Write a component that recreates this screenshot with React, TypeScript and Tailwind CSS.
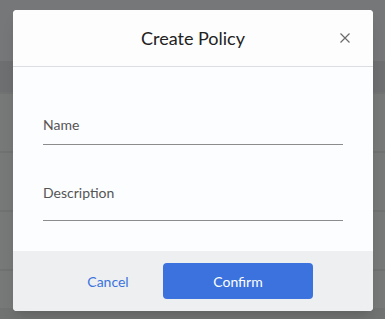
import React from "react";

export default function App() {
  return (
    <div
      className="relative w-[385px] h-[319px] overflow-hidden bg-[#767778]"
      style={{ fontFamily: "Lato, 'Noto Sans', sans-serif" }}
    >
      {/* dimmed page behind */}
      <div className="flex flex-col w-full h-full">
        <div className="h-[61px] bg-[#767778]" />
        <div className="h-[31px] bg-[#6e6f70]" />
        <div className="h-[2px] bg-[#717372]" />
        <div className="h-[57px] bg-[#777978]" />
        <div className="h-[2px] bg-[#707271]" />
        <div className="h-[57px] bg-[#777978]" />
        <div className="h-[2px] bg-[#707271]" />
        <div className="h-[57px] bg-[#777978]" />
        <div className="h-[2px] bg-[#707271]" />
        <div className="h-[37px] bg-[#777978]" />
        <div className="flex-1 bg-[#717372]" />
      </div>

      {/* modal */}
      <div className="absolute left-[13px] top-[10px] w-[360px] h-[301px] rounded-[4px] overflow-hidden bg-[#fcfdfe] flex flex-col shadow-lg">
        <div className="relative h-[57px] shrink-0 flex items-center justify-center border-b border-[#dcdde0] bg-[#fdfdfe]">
          <span className="text-[18px] leading-[24px] text-[#222222]">Create Policy</span>
          <button className="absolute right-[22px] top-[22px] w-[12px] h-[12px] flex items-center justify-center">
            <svg width="12" height="12" viewBox="0 0 12 12">
              <path d="M1.5 1.5 L10.5 10.5 M10.5 1.5 L1.5 10.5" stroke="#6b6b6b" strokeWidth="1.2" />
            </svg>
          </button>
        </div>
        <div className="flex-1 flex flex-col px-[30px] pt-[48px]">
          <div className="text-[14px] leading-[20px] text-[#555555]">Name</div>
          <div className="h-[10px] border-b border-[#8c8c8c]" />
          <div className="mt-[38px] text-[14px] leading-[20px] text-[#555555]">Description</div>
          <div className="h-[18px] border-b border-[#8c8c8c]" />
        </div>
        <div className="h-[60px] shrink-0 bg-[#eeeff1] flex items-center pl-[48px]">
          <button className="w-[94px] h-[36px] text-[14px] text-[#3b73de]">Cancel</button>
          <button className="ml-[8px] w-[150px] h-[36px] rounded-[4px] bg-[#3b72de] text-[14px] text-white">
            Confirm
          </button>
        </div>
      </div>
    </div>
  );
}
